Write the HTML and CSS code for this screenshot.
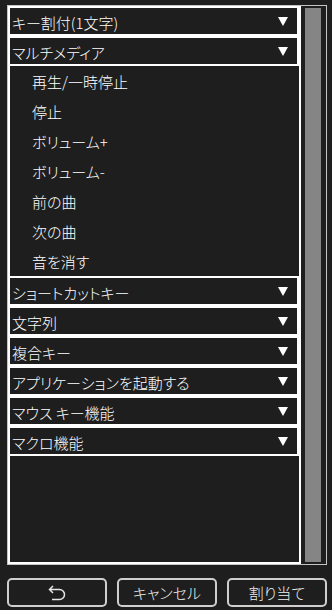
FILE: index.html
```html
<!DOCTYPE html>
<html lang="ja">
<head>
<meta charset="utf-8">
<link rel="stylesheet" href="styles.css">
</head>
<body>
<div class="panel">
  <div class="list">
    <div class="hdr"><span>キー割付(1文字)</span><svg class="tri" width="10" height="9" viewBox="0 0 10 9"><polygon points="0,0 10,0 5,9" fill="#fff"/></svg></div>
    <div class="hdr"><span>マルチメディア</span><svg class="tri" width="10" height="9" viewBox="0 0 10 9"><polygon points="0,0 10,0 5,9" fill="#fff"/></svg></div>
    <div class="sub">
      <div class="item">再生/一時停止</div>
      <div class="item">停止</div>
      <div class="item">ボリューム+</div>
      <div class="item">ボリューム-</div>
      <div class="item">前の曲</div>
      <div class="item">次の曲</div>
      <div class="item">音を消す</div>
    </div>
    <div class="hdr"><span>ショートカットキー</span><svg class="tri" width="10" height="9" viewBox="0 0 10 9"><polygon points="0,0 10,0 5,9" fill="#fff"/></svg></div>
    <div class="hdr"><span>文字列</span><svg class="tri" width="10" height="9" viewBox="0 0 10 9"><polygon points="0,0 10,0 5,9" fill="#fff"/></svg></div>
    <div class="hdr"><span>複合キー</span><svg class="tri" width="10" height="9" viewBox="0 0 10 9"><polygon points="0,0 10,0 5,9" fill="#fff"/></svg></div>
    <div class="hdr"><span>アプリケーションを起動する</span><svg class="tri" width="10" height="9" viewBox="0 0 10 9"><polygon points="0,0 10,0 5,9" fill="#fff"/></svg></div>
    <div class="hdr"><span>マウス キー機能</span><svg class="tri" width="10" height="9" viewBox="0 0 10 9"><polygon points="0,0 10,0 5,9" fill="#fff"/></svg></div>
    <div class="hdr"><span>マクロ機能</span><svg class="tri" width="10" height="9" viewBox="0 0 10 9"><polygon points="0,0 10,0 5,9" fill="#fff"/></svg></div>
  </div>
  <div class="track"><div class="thumb"></div></div>
</div>
<div class="buttons">
  <div class="btn"><svg width="18" height="16" viewBox="0 0 18 16"><path d="M5 1 L1.5 4.5 L5 8 M1.5 4.5 H11.5 A5 5 0 0 1 11.5 14.5 H4" fill="none" stroke="#e6e6e6" stroke-width="1.5"/></svg></div>
  <div class="btn">キャンセル</div>
  <div class="btn">割り当て</div>
</div>
</body>
</html>
```

FILE: styles.css
```css
html, body {
  margin: 0;
  padding: 0;
}
body {
  width: 332px;
  height: 610px;
  overflow: hidden;
  background: #1e1e1e;
  color: #fff;
  font-family: "Noto Sans CJK JP", "Noto Sans", sans-serif;
  font-size: 15px;
  font-weight: 300;
  line-height: 1;
  font-feature-settings: "palt";
}
.panel {
  margin: 5px 0 0 7px;
  width: 318px;
  height: 558px;
  border: 1px solid #c4c4c4;
  display: flex;
}
.list {
  width: 289px;
  height: 556px;
  border-left: 2px solid #fff;
  border-right: 2px solid #fff;
  border-bottom: 2px solid #fff;
}
.hdr {
  height: 26px;
  border-top: 2px solid #fff;
  border-bottom: 2px solid #fff;
  border-right: 2px solid #fff;
  display: flex;
  align-items: center;
  justify-content: space-between;
  padding: 0 9px 0 2px;
}
.hdr span {
  padding-top: 2px;
}
.tri {
  display: block;
}
.sub {
  height: 210px;
}
.item {
  height: 30px;
  display: flex;
  align-items: center;
  padding-left: 22px;
}
.item-text {
  display: block;
}
.track {
  width: 16px;
  padding: 2px 5px 2px 4px;
}
.thumb {
  height: 100%;
  background: #858585;
}
.buttons {
  display: flex;
  gap: 10px;
  margin: 13px 0 0 7px;
}
.btn {
  box-sizing: border-box;
  width: 100px;
  height: 29px;
  border: 2px solid #cfcfcf;
  border-radius: 5px;
  display: flex;
  align-items: center;
  justify-content: center;
  color: #f0f0f0;
}
```
